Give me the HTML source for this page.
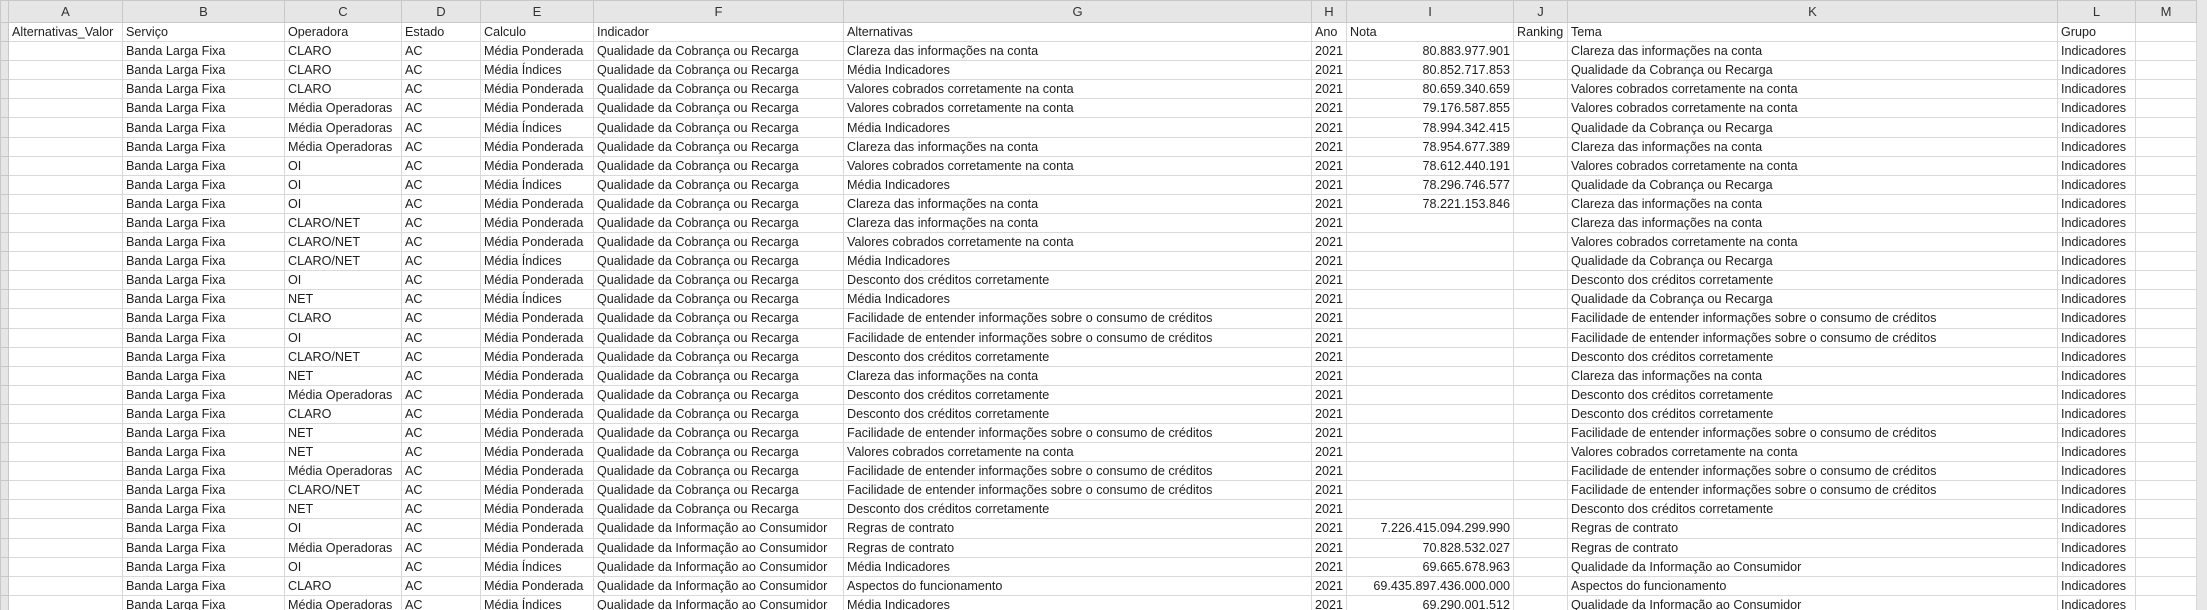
<!DOCTYPE html>
<html><head><meta charset="utf-8"><style>
html,body{margin:0;padding:0;background:#e8e8e8;width:2207px;height:610px;overflow:hidden}
table{border-collapse:collapse;table-layout:fixed;font-family:"Liberation Sans",sans-serif;font-size:12.6px;color:#1e1e1e;background:#fff}
td{border:1px solid #d9d9d9;height:18.1px;padding:0 3px;white-space:nowrap;overflow:hidden;line-height:18px}
tr.h td{background:#e6e6e6;height:21px;text-align:center;color:#333;border-color:#c8c8c8;font-size:13px}
td.r{background:#e6e6e6;border-color:#c8c8c8;padding:0}
td.n{text-align:right}
</style></head><body>
<table style="width:2196px">
<colgroup><col style="width:8px"><col style="width:114px"><col style="width:162px"><col style="width:117px"><col style="width:79px"><col style="width:113px"><col style="width:250px"><col style="width:468px"><col style="width:35px"><col style="width:167px"><col style="width:54px"><col style="width:490px"><col style="width:78px"><col style="width:61px"></colgroup>
<tr class="h"><td class="r"></td><td>A</td><td>B</td><td>C</td><td>D</td><td>E</td><td>F</td><td>G</td><td>H</td><td>I</td><td>J</td><td>K</td><td>L</td><td>M</td></tr>
<tr><td class="r"></td><td>Alternativas_Valor</td><td>Serviço</td><td>Operadora</td><td>Estado</td><td>Calculo</td><td>Indicador</td><td>Alternativas</td><td>Ano</td><td>Nota</td><td>Ranking</td><td>Tema</td><td>Grupo</td><td></td></tr>
<tr><td class="r"></td><td></td><td>Banda Larga Fixa</td><td>CLARO</td><td>AC</td><td>Média Ponderada</td><td>Qualidade da Cobrança ou Recarga</td><td>Clareza das informações na conta</td><td>2021</td><td class="n">80.883.977.901</td><td></td><td>Clareza das informações na conta</td><td>Indicadores</td><td></td></tr>
<tr><td class="r"></td><td></td><td>Banda Larga Fixa</td><td>CLARO</td><td>AC</td><td>Média Índices</td><td>Qualidade da Cobrança ou Recarga</td><td>Média Indicadores</td><td>2021</td><td class="n">80.852.717.853</td><td></td><td>Qualidade da Cobrança ou Recarga</td><td>Indicadores</td><td></td></tr>
<tr><td class="r"></td><td></td><td>Banda Larga Fixa</td><td>CLARO</td><td>AC</td><td>Média Ponderada</td><td>Qualidade da Cobrança ou Recarga</td><td>Valores cobrados corretamente na conta</td><td>2021</td><td class="n">80.659.340.659</td><td></td><td>Valores cobrados corretamente na conta</td><td>Indicadores</td><td></td></tr>
<tr><td class="r"></td><td></td><td>Banda Larga Fixa</td><td>Média Operadoras</td><td>AC</td><td>Média Ponderada</td><td>Qualidade da Cobrança ou Recarga</td><td>Valores cobrados corretamente na conta</td><td>2021</td><td class="n">79.176.587.855</td><td></td><td>Valores cobrados corretamente na conta</td><td>Indicadores</td><td></td></tr>
<tr><td class="r"></td><td></td><td>Banda Larga Fixa</td><td>Média Operadoras</td><td>AC</td><td>Média Índices</td><td>Qualidade da Cobrança ou Recarga</td><td>Média Indicadores</td><td>2021</td><td class="n">78.994.342.415</td><td></td><td>Qualidade da Cobrança ou Recarga</td><td>Indicadores</td><td></td></tr>
<tr><td class="r"></td><td></td><td>Banda Larga Fixa</td><td>Média Operadoras</td><td>AC</td><td>Média Ponderada</td><td>Qualidade da Cobrança ou Recarga</td><td>Clareza das informações na conta</td><td>2021</td><td class="n">78.954.677.389</td><td></td><td>Clareza das informações na conta</td><td>Indicadores</td><td></td></tr>
<tr><td class="r"></td><td></td><td>Banda Larga Fixa</td><td>OI</td><td>AC</td><td>Média Ponderada</td><td>Qualidade da Cobrança ou Recarga</td><td>Valores cobrados corretamente na conta</td><td>2021</td><td class="n">78.612.440.191</td><td></td><td>Valores cobrados corretamente na conta</td><td>Indicadores</td><td></td></tr>
<tr><td class="r"></td><td></td><td>Banda Larga Fixa</td><td>OI</td><td>AC</td><td>Média Índices</td><td>Qualidade da Cobrança ou Recarga</td><td>Média Indicadores</td><td>2021</td><td class="n">78.296.746.577</td><td></td><td>Qualidade da Cobrança ou Recarga</td><td>Indicadores</td><td></td></tr>
<tr><td class="r"></td><td></td><td>Banda Larga Fixa</td><td>OI</td><td>AC</td><td>Média Ponderada</td><td>Qualidade da Cobrança ou Recarga</td><td>Clareza das informações na conta</td><td>2021</td><td class="n">78.221.153.846</td><td></td><td>Clareza das informações na conta</td><td>Indicadores</td><td></td></tr>
<tr><td class="r"></td><td></td><td>Banda Larga Fixa</td><td>CLARO/NET</td><td>AC</td><td>Média Ponderada</td><td>Qualidade da Cobrança ou Recarga</td><td>Clareza das informações na conta</td><td>2021</td><td></td><td></td><td>Clareza das informações na conta</td><td>Indicadores</td><td></td></tr>
<tr><td class="r"></td><td></td><td>Banda Larga Fixa</td><td>CLARO/NET</td><td>AC</td><td>Média Ponderada</td><td>Qualidade da Cobrança ou Recarga</td><td>Valores cobrados corretamente na conta</td><td>2021</td><td></td><td></td><td>Valores cobrados corretamente na conta</td><td>Indicadores</td><td></td></tr>
<tr><td class="r"></td><td></td><td>Banda Larga Fixa</td><td>CLARO/NET</td><td>AC</td><td>Média Índices</td><td>Qualidade da Cobrança ou Recarga</td><td>Média Indicadores</td><td>2021</td><td></td><td></td><td>Qualidade da Cobrança ou Recarga</td><td>Indicadores</td><td></td></tr>
<tr><td class="r"></td><td></td><td>Banda Larga Fixa</td><td>OI</td><td>AC</td><td>Média Ponderada</td><td>Qualidade da Cobrança ou Recarga</td><td>Desconto dos créditos corretamente</td><td>2021</td><td></td><td></td><td>Desconto dos créditos corretamente</td><td>Indicadores</td><td></td></tr>
<tr><td class="r"></td><td></td><td>Banda Larga Fixa</td><td>NET</td><td>AC</td><td>Média Índices</td><td>Qualidade da Cobrança ou Recarga</td><td>Média Indicadores</td><td>2021</td><td></td><td></td><td>Qualidade da Cobrança ou Recarga</td><td>Indicadores</td><td></td></tr>
<tr><td class="r"></td><td></td><td>Banda Larga Fixa</td><td>CLARO</td><td>AC</td><td>Média Ponderada</td><td>Qualidade da Cobrança ou Recarga</td><td>Facilidade de entender informações sobre o consumo de créditos</td><td>2021</td><td></td><td></td><td>Facilidade de entender informações sobre o consumo de créditos</td><td>Indicadores</td><td></td></tr>
<tr><td class="r"></td><td></td><td>Banda Larga Fixa</td><td>OI</td><td>AC</td><td>Média Ponderada</td><td>Qualidade da Cobrança ou Recarga</td><td>Facilidade de entender informações sobre o consumo de créditos</td><td>2021</td><td></td><td></td><td>Facilidade de entender informações sobre o consumo de créditos</td><td>Indicadores</td><td></td></tr>
<tr><td class="r"></td><td></td><td>Banda Larga Fixa</td><td>CLARO/NET</td><td>AC</td><td>Média Ponderada</td><td>Qualidade da Cobrança ou Recarga</td><td>Desconto dos créditos corretamente</td><td>2021</td><td></td><td></td><td>Desconto dos créditos corretamente</td><td>Indicadores</td><td></td></tr>
<tr><td class="r"></td><td></td><td>Banda Larga Fixa</td><td>NET</td><td>AC</td><td>Média Ponderada</td><td>Qualidade da Cobrança ou Recarga</td><td>Clareza das informações na conta</td><td>2021</td><td></td><td></td><td>Clareza das informações na conta</td><td>Indicadores</td><td></td></tr>
<tr><td class="r"></td><td></td><td>Banda Larga Fixa</td><td>Média Operadoras</td><td>AC</td><td>Média Ponderada</td><td>Qualidade da Cobrança ou Recarga</td><td>Desconto dos créditos corretamente</td><td>2021</td><td></td><td></td><td>Desconto dos créditos corretamente</td><td>Indicadores</td><td></td></tr>
<tr><td class="r"></td><td></td><td>Banda Larga Fixa</td><td>CLARO</td><td>AC</td><td>Média Ponderada</td><td>Qualidade da Cobrança ou Recarga</td><td>Desconto dos créditos corretamente</td><td>2021</td><td></td><td></td><td>Desconto dos créditos corretamente</td><td>Indicadores</td><td></td></tr>
<tr><td class="r"></td><td></td><td>Banda Larga Fixa</td><td>NET</td><td>AC</td><td>Média Ponderada</td><td>Qualidade da Cobrança ou Recarga</td><td>Facilidade de entender informações sobre o consumo de créditos</td><td>2021</td><td></td><td></td><td>Facilidade de entender informações sobre o consumo de créditos</td><td>Indicadores</td><td></td></tr>
<tr><td class="r"></td><td></td><td>Banda Larga Fixa</td><td>NET</td><td>AC</td><td>Média Ponderada</td><td>Qualidade da Cobrança ou Recarga</td><td>Valores cobrados corretamente na conta</td><td>2021</td><td></td><td></td><td>Valores cobrados corretamente na conta</td><td>Indicadores</td><td></td></tr>
<tr><td class="r"></td><td></td><td>Banda Larga Fixa</td><td>Média Operadoras</td><td>AC</td><td>Média Ponderada</td><td>Qualidade da Cobrança ou Recarga</td><td>Facilidade de entender informações sobre o consumo de créditos</td><td>2021</td><td></td><td></td><td>Facilidade de entender informações sobre o consumo de créditos</td><td>Indicadores</td><td></td></tr>
<tr><td class="r"></td><td></td><td>Banda Larga Fixa</td><td>CLARO/NET</td><td>AC</td><td>Média Ponderada</td><td>Qualidade da Cobrança ou Recarga</td><td>Facilidade de entender informações sobre o consumo de créditos</td><td>2021</td><td></td><td></td><td>Facilidade de entender informações sobre o consumo de créditos</td><td>Indicadores</td><td></td></tr>
<tr><td class="r"></td><td></td><td>Banda Larga Fixa</td><td>NET</td><td>AC</td><td>Média Ponderada</td><td>Qualidade da Cobrança ou Recarga</td><td>Desconto dos créditos corretamente</td><td>2021</td><td></td><td></td><td>Desconto dos créditos corretamente</td><td>Indicadores</td><td></td></tr>
<tr><td class="r"></td><td></td><td>Banda Larga Fixa</td><td>OI</td><td>AC</td><td>Média Ponderada</td><td>Qualidade da Informação ao Consumidor</td><td>Regras de contrato</td><td>2021</td><td class="n">7.226.415.094.299.990</td><td></td><td>Regras de contrato</td><td>Indicadores</td><td></td></tr>
<tr><td class="r"></td><td></td><td>Banda Larga Fixa</td><td>Média Operadoras</td><td>AC</td><td>Média Ponderada</td><td>Qualidade da Informação ao Consumidor</td><td>Regras de contrato</td><td>2021</td><td class="n">70.828.532.027</td><td></td><td>Regras de contrato</td><td>Indicadores</td><td></td></tr>
<tr><td class="r"></td><td></td><td>Banda Larga Fixa</td><td>OI</td><td>AC</td><td>Média Índices</td><td>Qualidade da Informação ao Consumidor</td><td>Média Indicadores</td><td>2021</td><td class="n">69.665.678.963</td><td></td><td>Qualidade da Informação ao Consumidor</td><td>Indicadores</td><td></td></tr>
<tr><td class="r"></td><td></td><td>Banda Larga Fixa</td><td>CLARO</td><td>AC</td><td>Média Ponderada</td><td>Qualidade da Informação ao Consumidor</td><td>Aspectos do funcionamento</td><td>2021</td><td class="n">69.435.897.436.000.000</td><td></td><td>Aspectos do funcionamento</td><td>Indicadores</td><td></td></tr>
<tr><td class="r"></td><td></td><td>Banda Larga Fixa</td><td>Média Operadoras</td><td>AC</td><td>Média Índices</td><td>Qualidade da Informação ao Consumidor</td><td>Média Indicadores</td><td>2021</td><td class="n">69.290.001.512</td><td></td><td>Qualidade da Informação ao Consumidor</td><td>Indicadores</td><td></td></tr>
</table>
</body></html>
